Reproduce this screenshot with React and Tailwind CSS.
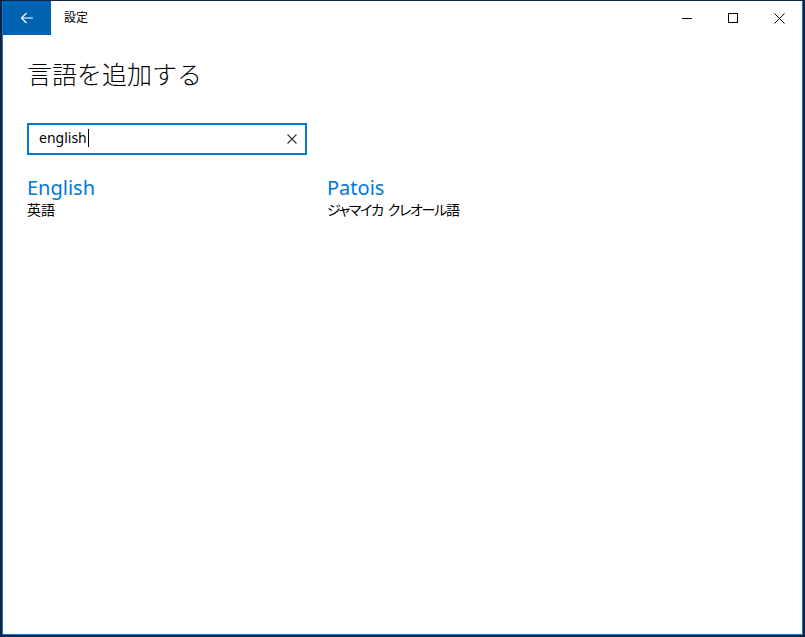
const font = { fontFamily: "'Noto Sans', 'Noto Sans CJK JP', sans-serif" };

function TitleBar() {
  return (
    <div className="flex h-[34px] items-stretch bg-white">
      <button className="flex w-[48px] items-center justify-center bg-[#0063b1] text-white">
        <svg width="14" height="14" viewBox="0 0 14 14" fill="none" stroke="white" strokeWidth="1.2">
          <path d="M13 7H1.5M6.5 2L1.5 7l5 5" />
        </svg>
      </button>
      <div className="flex flex-1 items-center pl-[13px] text-[12px] text-black">設定</div>
      <div className="flex">
        <div className="flex w-[46px] items-center justify-center">
          <svg width="10" height="10" viewBox="0 0 10 10"><path d="M0 5.5h10" stroke="black" strokeWidth="1" /></svg>
        </div>
        <div className="flex w-[46px] items-center justify-center">
          <svg width="10" height="10" viewBox="0 0 10 10" fill="none"><rect x="0.5" y="0.5" width="9" height="9" stroke="black" strokeWidth="1" /></svg>
        </div>
        <div className="flex w-[46px] items-center justify-center">
          <svg width="11" height="11" viewBox="0 0 11 11"><path d="M0.5 0.5l10 10M10.5 0.5l-10 10" stroke="black" strokeWidth="1" /></svg>
        </div>
      </div>
    </div>
  );
}

function Result({ name, children }) {
  return (
    <div className="w-[300px]">
      <div className="text-[20px] leading-[24px] text-[#0078d7]">{name}</div>
      <div className="mt-[1px] text-[14px] leading-[18px] text-black [font-feature-settings:'palt']">{children}</div>
    </div>
  );
}

export default function App() {
  return (
    <div className="h-[637px] w-[805px] overflow-hidden bg-[#0b2545] pt-[1px] pl-[2px] pr-[2px] pb-[2px]" style={font}>
      <div className="flex h-full flex-col border-l border-r border-b border-[#1a73c8] bg-white">
        <TitleBar />
        <div className="flex-1 px-[24px]">
          <h1 className="mt-[22px] text-[25px] font-light leading-[34px] text-black">言語を追加する</h1>
          <div className="mt-[32px] flex h-[32px] w-[280px] items-center border-2 border-[#0078d7] pl-[10px] pr-[8px]">
            <div className="flex flex-1 items-center text-[14px] leading-[20px] text-black">
              <span className="-mt-[3px]">english</span>
              <span className="-mt-[3px] ml-[1px] h-[18px] w-[1px] bg-black" />
            </div>
            <svg width="10" height="10" viewBox="0 0 10 10"><path d="M0.5 0.5l9 9M9.5 0.5l-9 9" stroke="#333" strokeWidth="1.1" /></svg>
          </div>
          <div className="mt-[21px] flex">
            <Result name="English">英語</Result>
            <Result name="Patois">
              <span className="tracking-[-1.3px]">ジャマイカ</span>
              <span className="ml-[5px] tracking-[-1.3px]">クレオール語</span>
            </Result>
          </div>
        </div>
      </div>
    </div>
  );
}
